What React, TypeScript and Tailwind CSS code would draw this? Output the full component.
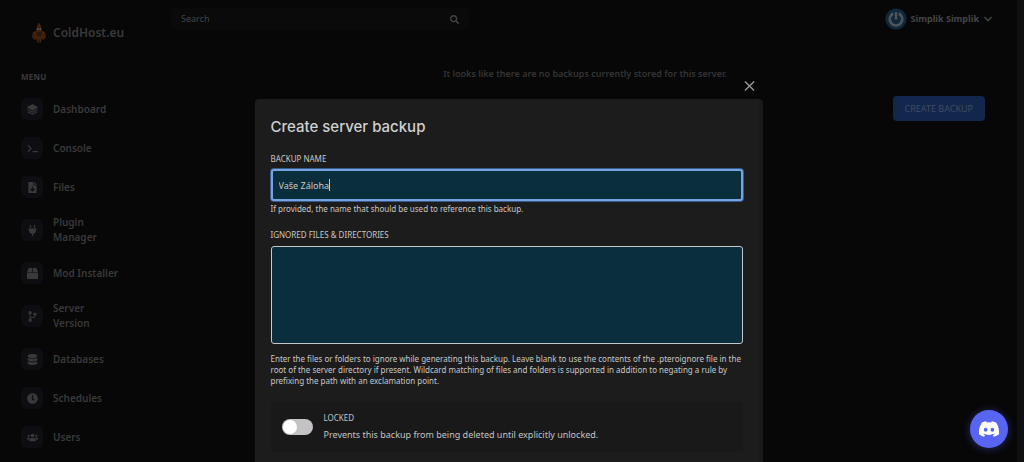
import { useState } from 'react'
import type { ReactNode } from 'react'
import { BiSolidLayer } from 'react-icons/bi'
import { FaBox, FaClock, FaCodeBranch, FaDatabase, FaDiscord, FaFileDownload, FaPlug, FaSearch, FaUsers } from 'react-icons/fa'

function PromptIcon({ className }: { className?: string }) {
  return (
    <svg viewBox="0 0 12 12" className={className} fill="none" stroke="currentColor" strokeWidth="1.3">
      <path d="M1 2.5 L4.5 6 L1 9.5 M6 9.5 H12" />
    </svg>
  )
}

const NAV = [
  { label: 'Dashboard', icon: BiSolidLayer, size: 'h-[13px] w-[13px]' },
  { label: 'Console', icon: PromptIcon, size: 'h-[11px] w-[11px]' },
  { label: 'Files', icon: FaFileDownload, size: 'h-[11px] w-[11px]' },
  { label: 'Plugin Manager', icon: FaPlug, size: 'h-[11px] w-[11px]' },
  { label: 'Mod Installer', icon: FaBox, size: 'h-[11px] w-[11px]' },
  { label: 'Server Version', icon: FaCodeBranch, size: 'h-[11px] w-[11px]' },
  { label: 'Databases', icon: FaDatabase, size: 'h-[11px] w-[11px]' },
  { label: 'Schedules', icon: FaClock, size: 'h-[11px] w-[11px]' },
  { label: 'Users', icon: FaUsers, size: 'h-[11px] w-[11px]' },
]

function Logo() {
  return (
    <svg viewBox="0 0 14 22" className="h-[22px] w-[14px]" aria-hidden="true">
      <path d="M7 0.5 L9 4 L9.5 9 L4.5 9 L5 4 Z" fill="#482111" />
      <path d="M1 10 L5 8.5 L9 8.5 L13 10 L14 15 L11.5 18 L9 17 L7 18 L5 17 L2.5 18 L0 15 Z" fill="#3f210b" />
      <path d="M4.5 10 L9.5 10 L9 14 L5 14 Z" fill="#27170e" />
      <path d="M5 17 L6.7 17 L6.5 21 L5 20 Z M7.6 17 L9.2 17 L9 20 L7.6 21 Z" fill="#4b2412" />
      <path d="M4.7 6.3 H6.4 V8 H4.7 Z M7.6 6.3 H9.3 V8 H7.6 Z" fill="#555555" />
    </svg>
  )
}

function Avatar() {
  return (
    <svg viewBox="0 0 22 22" className="h-[22px] w-[22px]" aria-hidden="true">
      <circle cx="11" cy="11" r="10.6" fill="#10283b" />
      <path d="M8.2 5.5 A6.3 6.3 0 1 0 13.8 5.5" fill="none" stroke="#505357" strokeWidth="2.6" />
      <path d="M11 4 V11.5" stroke="#505357" strokeWidth="2.4" />
    </svg>
  )
}

function Sidebar() {
  return (
    <aside className="w-[150px] shrink-0 pl-[21px]">
      <a href="#" className="mt-[22px] flex items-center gap-[7px] pl-[11px] text-[12px] leading-[22px] font-semibold text-[#393939]">
        <Logo />
        ColdHost.eu
      </a>
      <p className="mt-[26px] text-[8px] leading-[14px] font-bold tracking-wide text-[#3b3b3b]">MENU</p>
      <nav className="mt-[14px] flex flex-col gap-[17px]">
        {NAV.map(({ label, icon: Icon, size }) => (
          <a key={label} href="#" className="flex items-center gap-[10px] text-[10px] leading-[15px] font-semibold text-[#393939]">
            <span className="flex h-[22px] w-[22px] shrink-0 items-center justify-center rounded-md bg-[#0d0d12]">
              <Icon className={size} />
            </span>
            <span className="w-[70px]">{label}</span>
          </a>
        ))}
      </nav>
    </aside>
  )
}

function Header() {
  return (
    <header className="flex items-center justify-between pt-2">
      <label className="flex h-[22px] w-[298px] items-center rounded bg-[#0a0a0a] px-[10px] text-[#444444]">
        <input
          type="search"
          aria-label="Search"
          placeholder="Search"
          className="min-w-0 flex-1 bg-transparent text-[9px] outline-none placeholder:text-[#444444]"
        />
        <FaSearch className="h-[9px] w-[9px]" />
      </label>
      <button className="flex items-center gap-1 text-[9px] font-bold text-[#454545]">
        <Avatar />
        Simplik Simplik
        <svg viewBox="0 0 10 8" className="h-2 w-[10px]" fill="none" stroke="currentColor" strokeWidth="1.6" aria-hidden="true">
          <path d="M1.5 2 L5 5.7 L8.5 2" />
        </svg>
      </button>
    </header>
  )
}

function Field({ id, label, help, children }: { id: string; label: string; help: string; children: ReactNode }) {
  return (
    <div>
      <label htmlFor={id} className="block text-[8px] leading-[14px] text-[#c8c8c8] uppercase">
        {label}
      </label>
      {children}
      <p className="text-[8px] leading-[11px] text-[#c8c8c8]">{help}</p>
    </div>
  )
}

function BackupDialog() {
  const [name, setName] = useState('Vaše Záloha')
  const [locked, setLocked] = useState(false)

  return (
    <div className="fixed inset-0 flex justify-center overflow-hidden pr-[7px]">
      <div role="dialog" aria-labelledby="dialog-title" className="mt-20 flex w-[508px] flex-col">
        <button aria-label="Close" className="mr-2 flex h-[19px] items-start self-end text-[#999999]">
          <svg viewBox="0 0 12 12" className="h-3 w-[11px]" fill="none" stroke="currentColor" strokeWidth="1.5">
            <path d="M1 1 L11 11 M11 1 L1 11" />
          </svg>
        </button>
        <form className="flex-1 rounded-t-sm border-r-4 border-[#191919] bg-[#1c1c1c] pt-[17px] pr-4 pl-4">
          <h2 id="dialog-title" className="font-['Inter','Roboto',sans-serif] text-[15px] leading-[22px] font-medium text-[#d0d0d0]">
            Create server backup
          </h2>
          <div className="mt-[14px] flex flex-col gap-[14px]">
            <Field id="backup-name" label="Backup name" help="If provided, the name that should be used to reference this backup.">
              <div className="relative mt-[3px] mb-[2px]">
                <input
                  id="backup-name"
                  autoFocus
                  value={name}
                  onChange={(e) => setName(e.target.value)}
                  className="block h-8 w-full rounded-[3px] border-2 border-[#76a4e0] bg-[#0b2e3c] px-[6px] text-[9px] text-[#c8c8c8] caret-transparent ring-1 ring-[#36598e] outline-none"
                />
                {/* caret follows the typed text */}
                <span aria-hidden="true" className="pointer-events-none absolute inset-y-0 left-2 flex items-center text-[9px]">
                  <span className="h-3 border-r border-[#c8c8c8] leading-3 whitespace-pre text-transparent">{name}</span>
                </span>
              </div>
            </Field>
            <Field
              id="ignored-files"
              label="Ignored files & directories"
              help="Enter the files or folders to ignore while generating this backup. Leave blank to use the contents of the .pteroignore file in the root of the server directory if present. Wildcard matching of files and folders is supported in addition to negating a rule by prefixing the path with an exclamation point."
            >
              <textarea
                id="ignored-files"
                className="mt-1 mb-[9px] block h-[98px] w-full resize-none rounded-[3px] border border-[#c3c8ca] bg-[#0b2e3c] p-2 text-[9px] text-[#c8c8c8] outline-none"
              />
            </Field>
          </div>
          <label className="mt-4 flex items-center gap-[11px] rounded-sm bg-[#191919] px-[11px] py-[9px]">
            <input type="checkbox" checked={locked} onChange={(e) => setLocked(e.target.checked)} className="peer sr-only" />
            <span className="flex h-4 w-[31px] items-center rounded-full bg-[#c5c2c5] px-px peer-checked:justify-end">
              <span className="h-[14px] w-[14px] rounded-full bg-white" />
            </span>
            <span className="flex flex-col text-[#c3c3c3]">
              <span className="text-[8px] leading-[14px]">LOCKED</span>
              <span className="mt-[2px] text-[9px] leading-4">Prevents this backup from being deleted until explicitly unlocked.</span>
            </span>
          </label>
        </form>
      </div>
    </div>
  )
}

export default function App() {
  return (
    <div className="flex h-screen overflow-hidden border-r-[7px] border-[#0e0f11] bg-[#070707] font-['Noto_Sans','Open_Sans',sans-serif]">
      <Sidebar />
      <div className="flex-1 pr-6 pl-[21px]">
        <Header />
        <main>
          <p className="mt-9 pl-[6px] text-center text-[9px] leading-4 font-semibold text-[#343434]">
            It looks like there are no backups currently stored for this server.
          </p>
          <div className="mt-[14px] flex justify-end pr-2">
            <button className="h-[25px] rounded-sm bg-[#13264b] px-3 text-[9px] text-[#414b5f]">CREATE BACKUP</button>
          </div>
        </main>
      </div>
      <BackupDialog />
      <button
        aria-label="Discord"
        className="fixed right-4 bottom-[14px] flex h-[38px] w-[38px] items-center justify-center rounded-full bg-[#5865f2] text-white shadow-[0_1px_8px_#5865f266]"
      >
        <FaDiscord className="h-[22px] w-[22px]" />
      </button>
    </div>
  )
}
